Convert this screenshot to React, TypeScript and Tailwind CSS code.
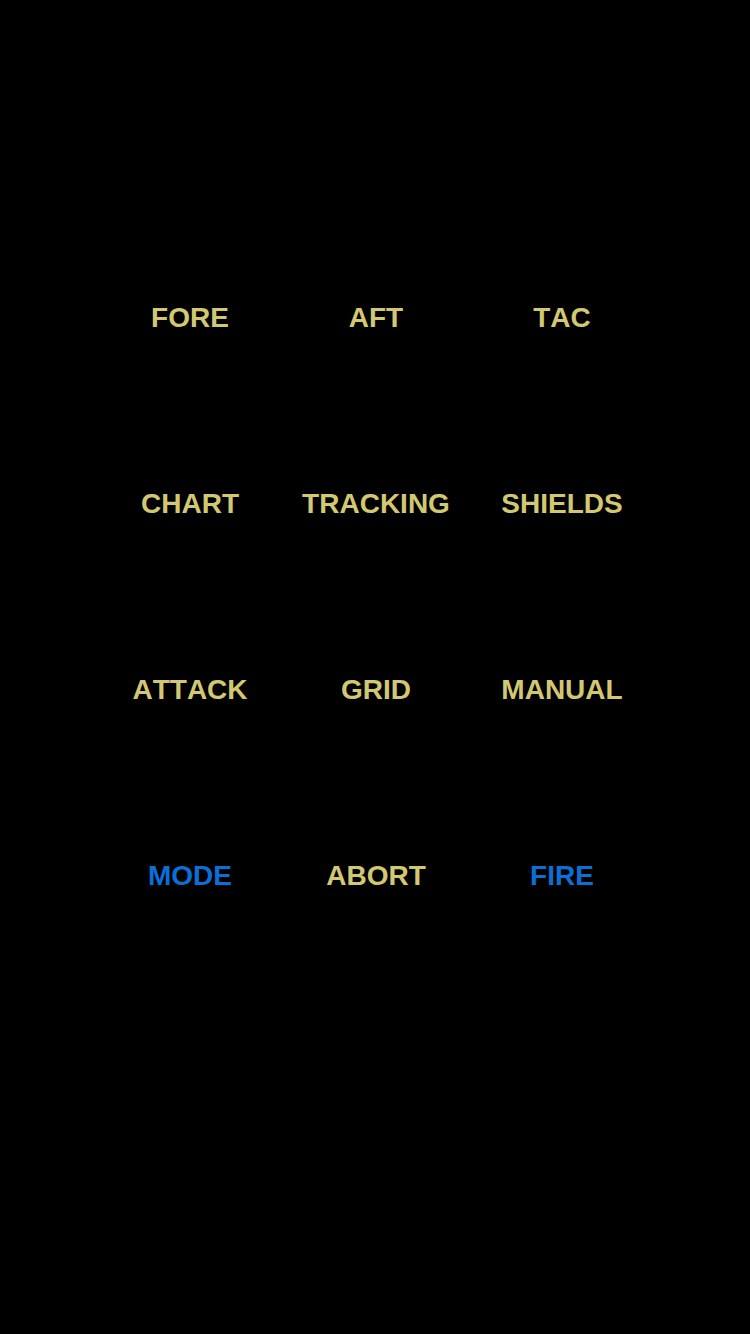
import React from "react";

type Key = { label: string; accent?: boolean };

const keys: Key[] = [
  { label: "FORE" },
  { label: "AFT" },
  { label: "TAC" },
  { label: "CHART" },
  { label: "TRACKING" },
  { label: "SHIELDS" },
  { label: "ATTACK" },
  { label: "GRID" },
  { label: "MANUAL" },
  { label: "MODE", accent: true },
  { label: "ABORT" },
  { label: "FIRE", accent: true },
];

export default function App() {
  return (
    <div
      className="min-h-[1334px] w-full bg-black pt-[225px] pl-[2px]"
      style={{ fontFamily: '"Liberation Sans", Arial, sans-serif' }}
    >
      <div className="mx-auto grid w-[558px] grid-cols-3">
        {keys.map((k) => (
          <button
            key={k.label}
            className={
              "flex h-[186px] items-center justify-center text-[28px] font-bold leading-none [font-kerning:none] " +
              (k.accent ? "text-[#0a6fd8]" : "text-[#d3c872]")
            }
          >
            {k.label}
          </button>
        ))}
      </div>
    </div>
  );
}
